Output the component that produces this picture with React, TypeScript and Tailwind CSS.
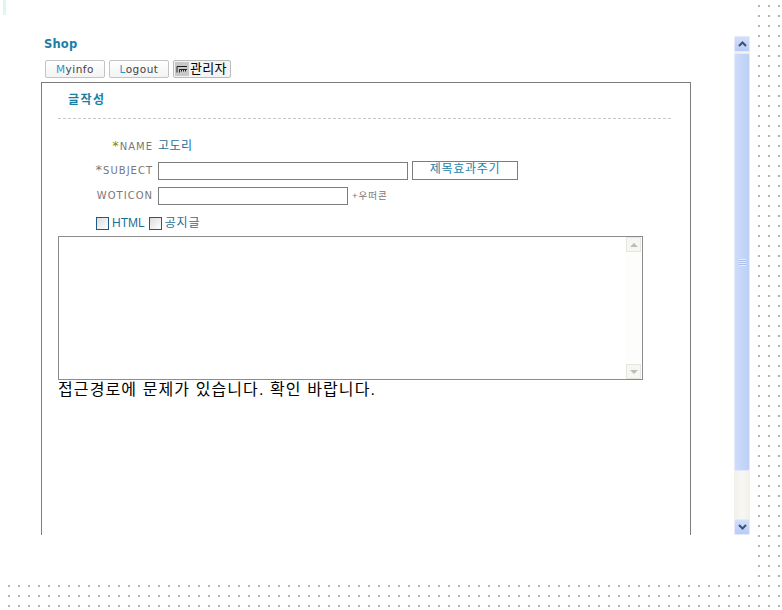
export default function App() {
  const kr = "font-['Liberation_Sans','Noto_Sans_CJK_KR',sans-serif]";
  const label = "font-['DejaVu_Sans',sans-serif] text-[10px] tracking-[1px] text-[#777] text-right w-[95px] leading-[14px]";
  const cb = "w-[13px] h-[13px] border border-[#1d5a8a] bg-gradient-to-br from-[#dcdcdc] to-white";
  const btn = "w-[60px] h-[18px] border border-[#c4c4c4] rounded-[2px] bg-gradient-to-b from-white to-[#f3f3f3] text-center text-[10.5px] leading-[17px] tracking-[0.5px] text-[#444] font-['DejaVu_Sans',sans-serif]";
  return (
    <div className={`relative w-[782px] h-[610px] overflow-hidden bg-white ${kr} bg-[radial-gradient(circle_at_9px_6px,#b4b4b4_1px,transparent_1.2px)] bg-[length:10px_10px]`}>
      <div className="absolute left-[3px] top-0 w-[3px] h-[15px] bg-[#dff5ef]" />
      <div className="w-[755px] h-[580px] bg-white pt-[36px]">
        <div className="flex h-[499px]">
          <div className="w-[734px] overflow-hidden">
            <div className="pl-[44px] mt-[1px] text-[11.5px] leading-[14px] font-bold text-[#1b7ea3] tracking-[0.2px] font-['DejaVu_Sans',sans-serif]">Shop</div>
            <div className="flex gap-[4px] pl-[45px] mt-[9px] h-[18px]">
              <div className={btn}><span className="text-[#1c9ad6]">M</span>yinfo</div>
              <div className={btn}><span className="text-[#1c9ad6]">L</span>ogout</div>
              <div className="w-[58px] h-[18px] border border-[#bbb] rounded-[2px] bg-[#f4f4f4] flex items-center pl-[1px] gap-[1px] text-[13px] text-black tracking-[0.3px]">
                <svg width="14" height="14" viewBox="0 0 14 14" className="shrink-0"><rect width="14" height="14" fill="#c8c8c8" /><path d="M2 4.5h10M2 4.5v6M4.5 10.5v-3h7.5M6.5 9.5v-2M8.5 9.5v-2M10.5 9.5v-2" stroke="#222" fill="none" strokeWidth="1" /></svg>
                <span className="whitespace-nowrap">관리자</span>
              </div>
            </div>
            <div className="ml-[41px] mt-[4px] w-[650px] h-[460px] border-x border-t border-[#7d7d7d] pl-[16px]">
              <div className="pl-[10px] pt-[9px] h-[36px] border-b border-dashed border-[#c8c8c8] w-[613px] text-[12px] leading-[16px] font-bold text-[#1b7ea3] tracking-[1.5px]">글작성</div>
              <div className="flex items-center h-[20px] mt-[17px]">
                <div className={label}><span className="text-[#7a8a00] text-[13px]">*</span>NAME</div>
                <div className="ml-[5px] text-[12px] text-[#1b7098] tracking-[0.4px]">고도리</div>
              </div>
              <div className="flex items-center h-[19px] mt-[5px]">
                <div className={label}><span className="text-[13px]">*</span>SUBJECT</div>
                <div className="ml-[5px] w-[250px] h-[18px] border border-[#7d7d7d] bg-white" />
                <div className="ml-[4px] w-[106px] h-[19px] border border-[#7d7d7d] bg-white text-center text-[12px] leading-[14px] tracking-[0.7px] text-[#1b82a8]">제목효과주기</div>
              </div>
              <div className="flex items-center h-[18px] mt-[7px]">
                <div className={label}>WOTICON</div>
                <div className="ml-[5px] w-[190px] h-[18px] border border-[#7d7d7d] bg-white" />
                <div className="ml-[4px] text-[9.5px] text-[#777] tracking-[1px]">+우떠콘</div>
              </div>
              <div className="flex items-center h-[14px] mt-[11px] ml-[38px] text-[12px] text-[#1b7098]">
                <div className={cb} />
                <span className="ml-[3px]">HTML</span>
                <div className={`${cb} ml-[4px]`} />
                <span className="ml-[3px] tracking-[0.9px]">공지글</span>
              </div>
              <div className="mt-[6px] w-[585px] h-[144px] border border-[#8c8c8c] flex justify-end pr-[1px] bg-white">
                <div className="w-[15px] bg-[#fdfdfb] flex flex-col justify-between">
                  <div className="h-[15px] border border-[#e6e6e0] bg-[#f6f6f2] flex items-center justify-center">
                    <div className="w-0 h-0 border-x-[4px] border-x-transparent border-b-[4px] border-b-[#bcbcbc]" />
                  </div>
                  <div className="h-[15px] border border-[#e6e6e0] bg-[#f6f6f2] flex items-center justify-center">
                    <div className="w-0 h-0 border-x-[4px] border-x-transparent border-t-[4px] border-t-[#bcbcbc]" />
                  </div>
                </div>
              </div>
              <div className="mt-[1px] text-[16px] leading-[18px] text-black tracking-[1.1px]">접근경로에 문제가 있습니다. 확인 바랍니다.</div>
            </div>
          </div>
          <div className="w-[16px] h-[499px] flex flex-col bg-gradient-to-r from-[#f1f0ea] via-[#f8f8f4] to-[#f1f0ea]">
            <div className="h-[16px] bg-gradient-to-b from-[#d2dffa] to-[#b8ccf5] border border-[#e2eafc] rounded-[2px] flex items-center justify-center">
              <svg width="9" height="6" viewBox="0 0 9 6"><path d="M1 5l3.5-3.5L8 5" stroke="#3d4f7c" strokeWidth="2" fill="none" /></svg>
            </div>
            <div className="mt-[1px] h-[418px] bg-gradient-to-r from-[#cfdcfa] to-[#bccff7] border border-[#e2eafc] rounded-[2px] flex items-center justify-center">
              <div className="w-[7px] h-[7px] bg-[repeating-linear-gradient(#e6eeff_0_1px,#a9bdec_1px_2px)]" />
            </div>
            <div className="flex-1" />
            <div className="h-[16px] bg-gradient-to-b from-[#d2dffa] to-[#b8ccf5] border border-[#e2eafc] rounded-[2px] flex items-center justify-center">
              <svg width="9" height="6" viewBox="0 0 9 6"><path d="M1 1l3.5 3.5L8 1" stroke="#3d4f7c" strokeWidth="2" fill="none" /></svg>
            </div>
          </div>
        </div>
      </div>
    </div>
  );
}
